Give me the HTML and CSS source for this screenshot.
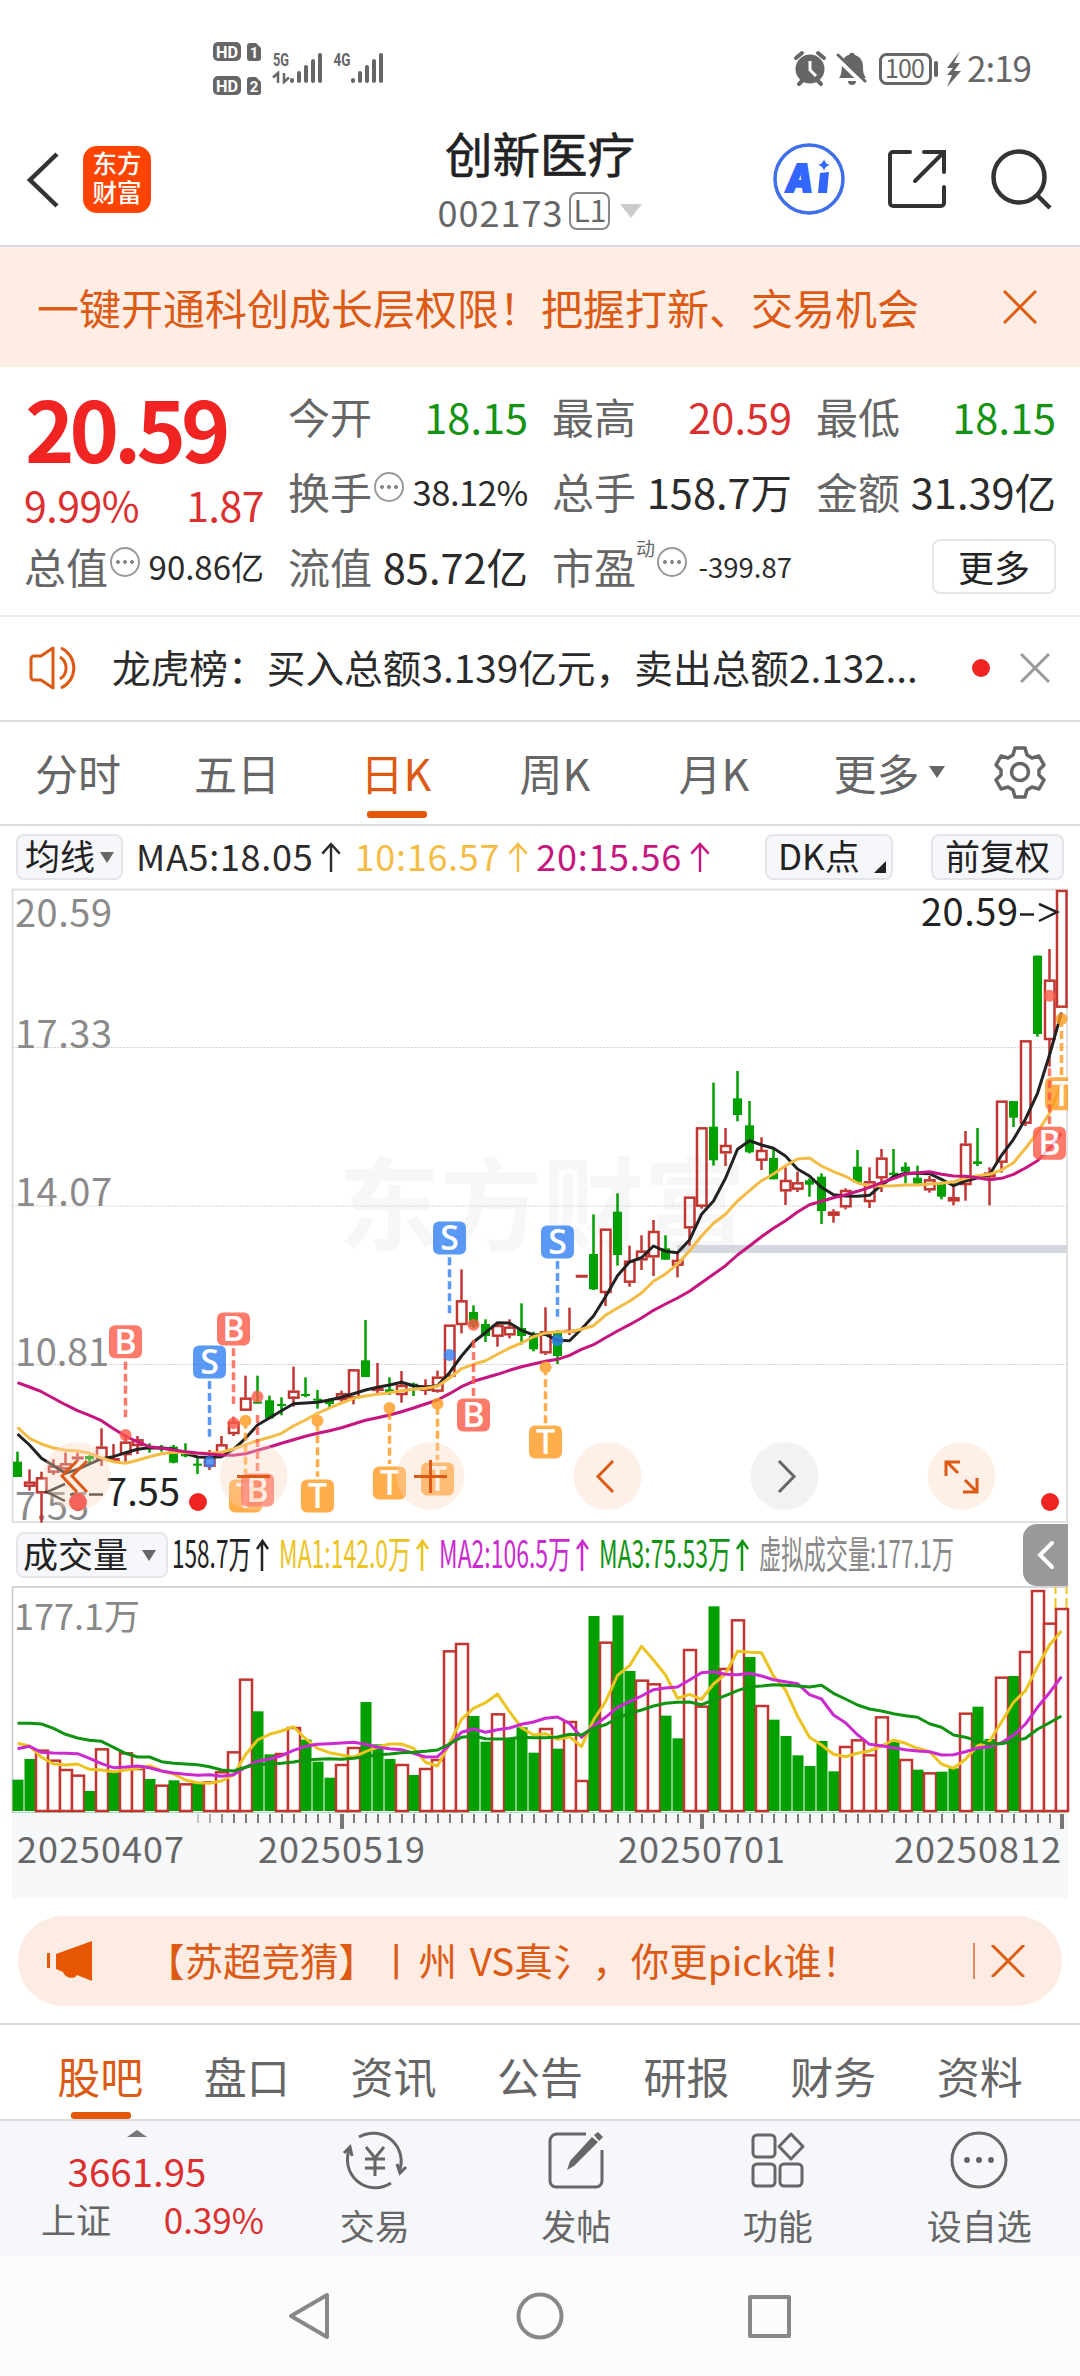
FILE: index.html
```html
<!DOCTYPE html>
<html lang="zh-CN">
<head>
  <meta charset="UTF-8">
  <meta name="viewport" content="width=device-width,initial-scale=1">
  <title>创新医疗 002173</title>
  <link rel="stylesheet" href="styles.css">
</head>
<body>
  <div class="status-bar">
    <svg class="status-left" viewBox="0 0 190 60" width="190" height="60">
      <g fill="#666">
        <rect x="3" y="2" width="28" height="19" rx="5"/>
        <path d="M37 6a3 3 0 013-3h6l5 5v10a3 3 0 01-3 3h-8a3 3 0 01-3-3z"/>
        <rect x="3" y="36" width="28" height="19" rx="5"/>
        <path d="M37 40a3 3 0 013-3h6l5 5v10a3 3 0 01-3 3h-8a3 3 0 01-3-3z"/>
      </g>
      <g class="badge-text" fill="#fff">
        <text x="17" y="17.500" font-size="16" textLength="22" lengthAdjust="spacingAndGlyphs">HD</text>
        <text x="44" y="17.500" font-size="15">1</text>
        <text x="17" y="51.500" font-size="16" textLength="22" lengthAdjust="spacingAndGlyphs">HD</text>
        <text x="44" y="51.500" font-size="15">2</text>
      </g>
      <g class="badge-text" fill="#666">
        <text x="71" y="26" font-size="18" textLength="16" lengthAdjust="spacingAndGlyphs">5G</text>
        <text x="132" y="26" font-size="18" textLength="17" lengthAdjust="spacingAndGlyphs">4G</text>
      </g>
      <path d="M68 43V33l-5 4.500M74 33v9l5-4.500" stroke="#666" stroke-width="2.500" fill="none"/>
      <g stroke="#666" stroke-width="4" stroke-linecap="round">
        <path d="M82 40v1M89 33v8M96 27v14M103 21v20M110 15v26"/>
        <path d="M143 40v1M150 33v8M157 27v14M164 21v20M171 15v26"/>
      </g>
    </svg>
    <svg class="status-right" viewBox="0 0 250 50" width="250" height="50">
      <circle cx="20" cy="23" r="14.500" fill="#666"/>
      <path d="M6 12l6-5M34 12l-6-5M9 38l4-4M31 38l-4-4" stroke="#666" stroke-width="4" stroke-linecap="round"/>
      <path d="M20 15v9l6 6" stroke="#fff" stroke-width="3" fill="none"/>
      <path d="M49 32c4-4 2-14 4-18 2-4 5-5 6-5 1-3 5-3 6 0 6 2 8 7 8 12 0 6 1 8 3 11z" fill="#666"/>
      <path d="M58 35h8a4 4 0 01-8 0z" fill="#666"/>
      <path d="M47 11l28 27" stroke="#fff" stroke-width="6"/>
      <path d="M48 9l27 26" stroke="#666" stroke-width="3" stroke-linecap="round"/>
      <rect x="90.500" y="8.500" width="50" height="29" rx="6" fill="none" stroke="#666" stroke-width="3"/>
      <path d="M146 17v12" stroke="#666" stroke-width="4" stroke-linecap="round"/>
      <text x="95" y="32" font-size="25" fill="#666" textLength="40">100</text>
      <path d="M170 5l-13 17h6l-6 7h5l-5 12 14-16h-7l6-8h-6z" fill="#666"/>
      <text x="177" y="36" font-size="35" fill="#666" textLength="65">2:19</text>
    </svg>
  </div>

  <header class="top-bar">
    <svg class="back" viewBox="0 0 36 60" width="36" height="60"><path d="M32 4L5 30l27 26" fill="none" stroke="#333" stroke-width="4.500"/></svg>
    <div class="logo"><span>东方</span><span>财富</span></div>
    <div class="stock-name">
      <h1>创新医疗</h1>
      <div class="stock-code">002173<span class="level">L1</span><i class="tri-down light"></i></div>
    </div>
    <div class="top-icons">
      <svg viewBox="0 0 74 74" width="74" height="74">
        <circle cx="37" cy="37" r="34" fill="none" stroke="#3f6eea" stroke-width="3.500"/>
        <text class="ai" x="14" y="50" font-size="39" textLength="27" lengthAdjust="spacingAndGlyphs">A</text>
        <path d="M48 31l9-1-2 21h-9z" fill="#3366ff"/>
        <path d="M52 17q1 5 6 6-5 1-6 6-1-5-6-6 5-1 6-6z" fill="#3366ff"/>
      </svg>
      <svg viewBox="0 0 60 60" width="60" height="60" fill="none" stroke="#333" stroke-width="4" stroke-linecap="round">
        <path d="M23 3H6a3 3 0 00-3 3v48a3 3 0 003 3h48a3 3 0 003-3V38M37 3h20v20M56 4L28 32"/>
      </svg>
      <svg viewBox="0 0 62 62" width="62" height="62" fill="none" stroke="#333" stroke-width="4.500">
        <circle cx="28" cy="28" r="25.500"/><path d="M46 46l13 13"/>
      </svg>
    </div>
  </header>

  <div class="promo">
    <span>一键开通科创成长层权限！把握打新、交易机会</span>
    <svg viewBox="0 0 34 34" width="34" height="34"><path d="M1 1l32 32M33 1L1 33" stroke="#e05a10" stroke-width="3"/></svg>
  </div>

  <section class="quote">
    <div class="quote-main">
      <div class="price">20.59</div>
      <div class="change"><span>9.99%</span><span>1.87</span></div>
      <div class="cell"><label>总值</label><i class="more-dot"></i><b class="s33">90.86亿</b></div>
    </div>
    <div class="quote-grid">
      <div class="cell"><label>今开</label><b class="down">18.15</b></div>
      <div class="cell"><label>最高</label><b class="up">20.59</b></div>
      <div class="cell"><label>最低</label><b class="down">18.15</b></div>
      <div class="cell"><label>换手</label><i class="more-dot"></i><b class="s36">38.12%</b></div>
      <div class="cell"><label>总手</label><b>158.7万</b></div>
      <div class="cell"><label>金额</label><b>31.39亿</b></div>
      <div class="cell"><label>流值</label><b>85.72亿</b></div>
      <div class="cell"><label>市盈</label><sup>动</sup><i class="more-dot"></i><b class="s28">-399.87</b></div>
      <div class="cell"><button class="more-btn">更多</button></div>
    </div>
  </section>

  <div class="notice">
    <svg viewBox="0 0 54 46" width="54" height="46" fill="none" stroke="#dd5a14" stroke-width="3">
      <path d="M24 3v40L12 35H5a3 3 0 01-3-3V14a3 3 0 013-3h7z" stroke-linejoin="round"/>
      <path d="M31 12a13 13 0 010 22M32 3a22 22 0 010 40"/>
    </svg>
    <span class="notice-text">龙虎榜：买入总额3.139亿元，卖出总额2.132...</span>
    <i class="red-dot"></i>
    <svg viewBox="0 0 30 30" width="30" height="30"><path d="M1 1l28 28M29 1L1 29" stroke="#999" stroke-width="3"/></svg>
  </div>

  <nav class="period-tabs">
    <span>分时</span>
    <span>五日</span>
    <span class="active">日K</span>
    <span>周K</span>
    <span>月K</span>
    <span class="period-more">更多<i class="tri-down small"></i></span>
    <svg viewBox="0 0 54 54" width="54" height="54" fill="none" stroke="#666" stroke-width="3.500">
      <path d="M22 3h10l2 7 5 3 7-2 5 9-5 5v5l5 5-5 9-7-2-5 3-2 7H22l-2-7-5-3-7 2-5-9 5-5v-5l-5-5 5-9 7 2 5-3z" stroke-linejoin="round"/>
      <circle cx="27" cy="27" r="8.500"/>
    </svg>
  </nav>

  <div class="ma-bar">
    <span class="chip">均线<i class="tri-down small"></i></span>
    <span class="ma ma5">MA5:18.05<svg class="up-arrow" viewBox="0 0 20 32"><path d="M10 31V2M1 12l9-10 9 10"/></svg></span>
    <span class="ma ma10">10:16.57<svg class="up-arrow" viewBox="0 0 20 32"><path d="M10 31V2M1 12l9-10 9 10"/></svg></span>
    <span class="ma ma20">20:15.56<svg class="up-arrow" viewBox="0 0 20 32"><path d="M10 31V2M1 12l9-10 9 10"/></svg></span>
    <span class="chip dk">DK点<i class="corner"></i></span>
    <span class="chip fq">前复权</span>
  </div>

  <svg class="k-chart" viewBox="0 0 1080 636" width="1080" height="636">
    <defs><clipPath id="plot"><rect x="12" y="0" width="1056" height="635"/></clipPath></defs>
    <text class="watermark" x="338" y="355" textLength="408">东方财富</text>
    <path d="M12.500 1v634M1067 1v634M12 1.500h1056M12 634h1056" stroke="#e0e0e0" stroke-width="2"/>
    <path d="M12 159.500h1056M12 318h1056M12 476.500h1056" stroke="#d5d5d5" stroke-width="1" stroke-dasharray="2 1"/>
    <g class="axis-text">
      <text x="15" y="39" textLength="97">20.59</text>
      <text x="15" y="160" textLength="97">17.33</text>
      <text x="15" y="318" textLength="97">14.07</text>
      <text x="15" y="478" textLength="94">10.81</text>
      <text x="15" y="632" textLength="74">7.55</text>
    </g>
    <rect x="677" y="357" width="390" height="8" fill="#d5d7de"/>
    <g id="candles" clip-path="url(#plot)"></g>
    <g class="mark-text">
      <text x="921" y="38" textLength="97">20.59</text>
      <text x="106" y="618" textLength="74">7.55</text>
    </g>
    <path d="M1020 26.500h14M1039 16l18 8-18 9M65 596l-18 8 18 9M70 606.500h9M89 606.500h14" fill="none" stroke="#222" stroke-width="2.500"/>
    <g fill="#f12424">
      <circle cx="78" cy="614" r="9"/><circle cx="198" cy="614" r="9"/><circle cx="1050" cy="614" r="9"/>
    </g>
    <g fill="#fbd3bd" fill-opacity=".36">
      <circle cx="77" cy="588" r="34"/><circle cx="253.500" cy="588" r="34"/><circle cx="430.500" cy="588" r="34"/>
      <circle cx="607.500" cy="588" r="34"/><circle cx="961.500" cy="588" r="34"/>
    </g>
    <circle cx="784.500" cy="588" r="34" fill="#f2f2f2"/>
    <g fill="none" stroke="#dd5a14" stroke-width="3">
      <path d="M77 573L62 588l15 16M87 573L72 588l15 16M237 588.500h33M414 588.500h33M430.500 572v33"/>
      <path d="M613 573l-15 15.500 15 15.500M958 585l-12-12M960 574h-14v14M965 592l12 12M963 604h14v-14"/>
      <path d="M779 573l15 15.500-15 15.500" stroke="#666"/>
    </g>
  </svg>

  <div class="vol-bar">
    <span class="chip">成交量<i class="tri-down small"></i></span>
    <svg class="vol-values" viewBox="170 0 800 62" width="800" height="62">
      <g font-size="38">
        <text x="172" y="44" fill="#222" textLength="79" lengthAdjust="spacingAndGlyphs">158.7万</text>
        <text x="279" y="44" fill="#ecc31f" textLength="132" lengthAdjust="spacingAndGlyphs">MA1:142.0万</text>
        <text x="439" y="44" fill="#cc2ad1" textLength="132" lengthAdjust="spacingAndGlyphs">MA2:106.5万</text>
        <text x="599" y="44" fill="#109310" textLength="132" lengthAdjust="spacingAndGlyphs">MA3:75.53万</text>
        <text x="759" y="44" fill="#888" textLength="195" lengthAdjust="spacingAndGlyphs">虚拟成交量:177.1万</text>
      </g>
      <g fill="none" stroke-width="2.500">
        <path d="M262 47V17M257 25l5.500-8 5.500 8" stroke="#222"/>
        <path d="M422 47V17M417 25l5.500-8 5.500 8" stroke="#ecc31f"/>
        <path d="M582 47V17M577 25l5.500-8 5.500 8" stroke="#cc2ad1"/>
        <path d="M742 47V17M737 25l5.500-8 5.500 8" stroke="#109310"/>
      </g>
    </svg>
    <span class="side-handle"><svg viewBox="0 0 20 32" width="20" height="32"><path d="M16 4L4 16l12 12" fill="none" stroke="#fff" stroke-width="4" stroke-linecap="round"/></svg></span>
  </div>

  <svg class="v-chart" viewBox="0 0 1080 227" width="1080" height="227">
    <path d="M12.500 227V1H1068" fill="none" stroke="#c8c8c8" stroke-width="1.500"/>
    <path d="M12 226.500h1056" stroke="#b5d8b5"/>
    <text x="14" y="44" font-size="36" fill="#888" textLength="126">177.1万</text>
    <path d="M1055.500 24V1M1066.500 24V1" stroke="#ecc31f" stroke-width="2" stroke-dasharray="12 4"/>
    <g id="volumes"></g>
  </svg>

  <svg class="time-axis" viewBox="12 0 1056 85" width="1056" height="85">
    <g id="ticks"></g>
    <g class="axis-date">
      <text x="17" y="50" textLength="167">20250407</text>
      <text x="258" y="50" textLength="167">20250519</text>
      <text x="618" y="50" textLength="167">20250701</text>
      <text x="894" y="50" textLength="167">20250812</text>
    </g>
  </svg>

  <div class="event">
    <svg viewBox="0 0 46 40" width="46" height="40" fill="#e85803"><path d="M0 12h3v15H0zM9 13L45 0v40l-15-6c-3 5-12 3-14-3l-7-3z"/></svg>
    <span class="event-text">【苏超竞猜】丨<em>州 VS真</em>氵，你更pick谁！</span>
    <i class="event-line"></i>
    <svg viewBox="0 0 34 32" width="34" height="32"><path d="M1 0l32 32M33 0L1 32" stroke="#e05a10" stroke-width="3"/></svg>
  </div>

  <nav class="info-tabs">
    <span class="active">股吧</span><span>盘口</span><span>资讯</span><span>公告</span><span>研报</span><span>财务</span><span>资料</span>
  </nav>

  <footer class="bottom-bar">
    <div class="index-box">
      <i class="tri-up"></i>
      <div class="index-value">3661.95</div>
      <div class="index-row"><span>上证</span><span class="up">0.39%</span></div>
    </div>
    <div class="action">
      <svg viewBox="0 0 66 60" width="66" height="60" fill="none" stroke="#666" stroke-width="3">
        <path d="M17 7A28 28 0 0157 42M49 53A28 28 0 018 18"/>
        <path d="M2 23l6-6 2 9M64 37l-6 6-3-9M24 17l9 11 9-11M23 29h20M23 38h20M33 28v18"/>
      </svg>
      <span>交易</span>
    </div>
    <div class="action">
      <svg viewBox="0 0 56 60" width="56" height="60" fill="none" stroke="#666" stroke-width="3">
        <path d="M38 4H9a7 7 0 00-7 7v40a6 6 0 006 6h40a6 6 0 006-6V20"/>
        <path d="M44 7l6 5-24 24-7 4 3-9zM46 5l4-3 5 5-4 4z" fill="#666" stroke="none"/>
      </svg>
      <span>发帖</span>
    </div>
    <div class="action">
      <svg viewBox="0 0 56 60" width="56" height="60" fill="none" stroke="#666" stroke-width="3">
        <rect x="3" y="5" width="22" height="22" rx="4"/>
        <rect x="3" y="34" width="22" height="22" rx="4"/>
        <rect x="30" y="34" width="22" height="22" rx="4"/>
        <path d="M41 4l12 12.500L41 29 29 16.500z" stroke-linejoin="round"/>
      </svg>
      <span>功能</span>
    </div>
    <div class="action">
      <svg viewBox="0 0 60 60" width="60" height="60" fill="#666">
        <circle cx="30" cy="30" r="27" fill="none" stroke="#666" stroke-width="3"/>
        <circle cx="18" cy="30" r="3"/><circle cx="30" cy="30" r="3"/><circle cx="42" cy="30" r="3"/>
      </svg>
      <span>设自选</span>
    </div>
  </footer>

  <div class="sys-nav">
    <svg viewBox="0 0 1080 120" width="1080" height="120" fill="none" stroke="#888" stroke-width="4" stroke-linejoin="round">
      <path d="M327 39v42l-36-21z"/><circle cx="540" cy="60" r="21.500"/><rect x="750" y="41" width="39" height="39"/>
    </svg>
  </div>
  <script src="script.js"></script>
</body>
</html>
```
FILE: styles.css
```css
:root {
  --up: #dc2f2f;
  --down: #149314;
  --orange: #dd5a14;
  --text: #2b2b2b;
  --gray: #666;
  --line: #dcdcdc;
  --peach: #fdede4;
  --chip: #f6f7fa;
}
* { box-sizing: border-box; }
body {
  margin: 0; width: 1080px; height: 2376px;
  font-family: "Noto Sans CJK SC", "Noto Sans", sans-serif;
  background: #fff; color: var(--text);
  overflow-x: hidden;
}
svg { display: block; flex: none; }
i, em { font-style: normal; }
.up { color: var(--up) !important; }
.down { color: var(--down) !important; }

/* status bar */
.status-bar {
  height: 130px; padding: 40px 32px 0 210px;
  display: flex; justify-content: space-between; align-items: flex-start;
}
.status-right { margin-top: 6px; margin-right: 8px; }
.badge-text { font-family: Roboto, sans-serif; font-weight: 700; text-anchor: middle; }

/* header */
.top-bar {
  height: 117px; border-bottom: 2px solid var(--line);
  display: grid; grid-template-columns: 83px 200px 514px 1fr;
}
.back { margin: 20px 0 0 25px; }
.logo {
  width: 68px; height: 67px; margin-top: 16px; padding-top: 2px;
  border-radius: 14px; background: #fe4400; color: #fff;
  font-size: 24.500px; line-height: 29px; font-weight: 500;
  display: flex; flex-direction: column; align-items: center;
}
.stock-name { text-align: center; }
.stock-name h1 { margin: -5px 0 0; font-size: 47.500px; line-height: 56px; font-weight: 400; color: #222; -webkit-text-stroke: .6px #222; }
.stock-code {
  display: flex; justify-content: center; align-items: center;
  font-size: 36px; line-height: 40px; color: var(--gray); letter-spacing: 1px;
  margin-top: 10px;
}
.level {
  width: 41px; height: 38px; margin-left: 6px; border: 2px solid #888; border-radius: 8px;
  font-size: 30px; line-height: 31px; letter-spacing: 0;
}
.tri-down {
  display: inline-block; width: 0; height: 0;
  border: 8px solid transparent; border-top: 12px solid #666; border-bottom: 0;
}
.tri-down.light { border-width: 14px 11px 0; border-top-color: #ccc; margin-left: 10px; }
.top-icons { display: flex; align-items: flex-start; margin: 12px 0 0 -25px; }
.top-icons svg:nth-child(2) { margin: 7px 0 0 41px; }
.top-icons svg:nth-child(3) { margin: 7px 0 0 44px; }
.ai { font-family: Inter, sans-serif; font-weight: 900; font-style: italic; fill: #3366ff; stroke: #3366ff; stroke-width: 2; }

.promo {
  height: 120px; padding: 0 43px 0 37px; background: var(--peach); color: var(--orange);
  font-size: 42px; line-height: 116px;
  display: flex; justify-content: space-between; align-items: center;
}

/* quote */
.quote {
  height: 250px; padding: 14px 24px 0; border-bottom: 2px solid #ebebeb;
  display: grid; grid-template-columns: 240px 768px; column-gap: 24px;
}
.quote-grid { display: grid; grid-template-columns: repeat(3, 240px); grid-auto-rows: 75px; column-gap: 24px; }
.cell { display: flex; align-items: center; height: 75px; line-height: 70px; padding-bottom: 5px; }
.cell label { font-size: 42px; color: var(--gray); white-space: nowrap; }
.cell b { margin-left: auto; font-size: 41.500px; font-weight: 400; }
.cell b.s36 { font-size: 34.500px; letter-spacing: -.4px; }
.cell b.s33 { font-size: 33px; }
.cell b.s28 { font-size: 27.500px; }
.cell sup { font-size: 19px; line-height: 20px; color: var(--gray); align-self: flex-start; margin-top: 7px; }
.more-dot {
  width: 30px; height: 30px; margin: -8px 0 0 2px; border: 2px solid #999; border-radius: 50%;
  background:
    radial-gradient(circle, #888 1.800px, transparent 2.200px) -7px 0 / 100% 100% no-repeat,
    radial-gradient(circle, #888 1.800px, transparent 2.200px) 0 0 / 100% 100% no-repeat,
    radial-gradient(circle, #888 1.800px, transparent 2.200px) 7px 0 / 100% 100% no-repeat;
}
.price {
  height: 100px; padding-left: 1px; color: #f12424;
  font-size: 84px; line-height: 92px; font-weight: 700; letter-spacing: -5px;
}
.change { height: 50px; display: flex; justify-content: space-between; color: var(--up); font-size: 41px; line-height: 46px; letter-spacing: -.5px; }
.more-btn {
  width: 124px; height: 55px; margin: 0 0 0 auto; padding: 0; font: 36px/45px "Noto Sans CJK SC", sans-serif; color: #222;
  background: #fff; border: 2px solid #e6e6e6; border-radius: 8px;
}

.notice { height: 105px; border-bottom: 2px solid var(--line); padding: 0 30px 2px 29px; display: flex; align-items: center; }
.notice-text { margin-left: 29px; width: 861px; font-size: 38.700px; line-height: 96px; white-space: nowrap; padding-bottom: 4px; }
.red-dot { width: 18px; height: 18px; border-radius: 50%; background: #f12424; margin-right: 30px; }

/* period tabs */
.period-tabs { height: 104px; border-bottom: 2px solid var(--line); display: flex; align-items: center; color: var(--gray); }
.period-tabs span { position: relative; width: 160px; margin-left: -1px; text-align: center; font-size: 43px; line-height: 102px; padding-bottom: 2px; }
.period-tabs span:first-child { margin-left: -2px; }
.period-tabs span.period-more { width: 180px; margin-left: 5px; }
.period-more .tri-down { margin-left: 9px; vertical-align: 13px; }
.period-tabs svg { margin: -2px 0 0 14px; }
.period-tabs .active, .info-tabs .active { color: var(--orange); }
.active::after {
  content: ""; position: absolute; left: 50%; bottom: 7px; width: 60px; height: 7px; margin-left: -29px;
  border-radius: 3px; background: #e45703;
}

/* chart legends */
.ma-bar { height: 62px; padding: 8px 16px 0; display: flex; align-items: flex-start; }
.chip {
  height: 46px; background: var(--chip); border: 2px solid #e4e6ea; border-radius: 8px;
  font-size: 35px; line-height: 38px; padding: 0 7px; color: #222; white-space: nowrap; flex: none;
}
.chip .tri-down { margin-left: 5px; vertical-align: 7px; border-width: 11px 7px 0; }
.ma { display: flex; align-items: center; font-size: 36px; line-height: 42px; letter-spacing: .7px; }
.up-arrow { width: 20px; height: 31px; margin: 4px 0 0 8px; fill: none; stroke: currentColor; stroke-width: 2.500; }
.ma5 { margin-left: 13px; width: 219px; }
.ma10 { width: 182px; color: #f5bc45; }
.ma20 { width: 227px; color: #c7157f; }
.chip.dk { width: 128px; padding-left: 11px; margin-left: 2px; position: relative; }
.corner { position: absolute; right: 5px; bottom: 5px; border-left: 12px solid transparent; border-bottom: 12px solid #222; }
.chip.fq { margin-left: 38px; padding: 0 12px; }

.watermark { font-size: 102px; font-weight: 700; fill: #f7f7f7; }
.axis-text { font-size: 38px; fill: #8a8a8a; }
.mark-text { font-size: 38px; fill: #222; }
.badge { font-family: "Open Sans", sans-serif; font-size: 34px; font-weight: 600; fill: #fff; text-anchor: middle; }

.vol-bar { height: 62px; display: flex; padding-left: 16px; }
.vol-bar .chip { width: 152px; margin-top: 8px; padding: 0 5px; }
.vol-bar .chip .tri-down { margin-left: 14px; }
.vol-values { margin-left: 2px; }
.side-handle {
  width: 45px; height: 62px; margin-left: 53px; background: #999; border-radius: 14px 0 0 14px;
  display: flex; align-items: center; justify-content: center;
}
.time-axis { margin-left: 12px; background: #f7f8fa; }
.axis-date { font-size: 36px; fill: #666; }

/* event banner */
.event {
  height: 90px; margin: 18px 18px 17px; padding: 0 37px 0 29px; border-radius: 45px;
  background: #fcece3; color: var(--orange); display: flex; align-items: center;
}
.event-text { margin-left: 53px; width: 829px; font-size: 38.500px; line-height: 84px; padding-bottom: 5px; white-space: pre; }
.event-text em { margin: 0 1px 0 3px; word-spacing: 4px; }
.event-line { width: 2px; height: 36px; margin-right: 16px; background: #e08a5c; }

.info-tabs { height: 98px; padding: 0 27px; border: solid var(--line); border-width: 2px 0; display: flex; color: var(--gray); }
.info-tabs span { position: relative; flex: 1; text-align: center; font-size: 43px; line-height: 101px; }
.info-tabs .active::after { bottom: 0; }

.bottom-bar { height: 135px; background: var(--chip); display: flex; color: var(--gray); }
.index-box { width: 274px; padding-top: 9px; text-align: center; }
.tri-up { display: block; width: 0; margin: 0 auto; border: 10px solid transparent; border-top: 0; border-bottom: 7px solid #777; }
.index-value { font-size: 38.500px; line-height: 50px; color: var(--up); margin-top: 8px; }
.index-row { display: flex; justify-content: space-between; padding: 0 10px 0 41px; font-size: 35px; line-height: 47px; }
.action { flex: 1; display: flex; flex-direction: column; align-items: center; padding-top: 9px; }
.action span { font-size: 35px; line-height: 50px; margin-top: 10px; }
.sys-nav { height: 120px; background: #fcfcfc; }
```
FILE: script.js
```js
// price chart: [high, body top, body bottom, low, up?], thirds of a pixel from the top
const candles = [
  [1715,1745,1791,1791,0],[1768,1805,1820,1832,1],[1775,1792,1840,1928,1],[1738,1757,1778,1785,1],
  [1718,1750,1768,1780,1],[1718,1730,1734,1745,1],[1726,1728,1738,1750,0],[1645,1700,1740,1758,1],
  [1692,1735,1739,1740,1],[1665,1685,1725,1745,1],[1668,1678,1698,1722,1],[1690,1700,1705,1718,0],
  [1695,1700,1704,1715,0],[1695,1700,1748,1750,0],[1690,1722,1729,1732,0],[1735,1751,1756,1782,0],
  [1710,1730,1760,1770,1],[1668,1693,1720,1722,1],[1610,1625,1662,1668,1],[1487,1553,1592,1592,1],
  [1487,1565,1571,1571,0],[1547,1561,1615,1617,0],[1552,1572,1577,1606,0],[1460,1532,1556,1580,1],
  [1492,1542,1546,1552,0],[1530,1556,1561,1586,0],[1555,1560,1572,1583,0],[1532,1540,1560,1565,1],
  [1468,1468,1555,1573,1],[1320,1441,1491,1491,0],[1449,1525,1531,1540,1],[1492,1528,1536,1545,0],
  [1473,1515,1545,1568,1],[1508,1511,1520,1548,0],[1498,1516,1532,1545,1],[1472,1490,1535,1538,1],
  [1334,1334,1490,1492,1],[1168,1261,1335,1360,1],[1276,1296,1340,1345,0],[1318,1332,1368,1386,0],
  [1330,1335,1370,1400,1],[1318,1340,1366,1375,1],[1270,1344,1368,1394,0],[1355,1368,1408,1414,0],
  [1282,1354,1420,1425,1],[1350,1358,1428,1452,0],[1283,1350,1356,1365,1],[1185,1185,1188,1188,1],
  [1003,1122,1228,1230,0],[1046,1046,1239,1278,1],[940,995,1125,1157,0],[1097,1142,1208,1220,1],
  [1066,1112,1141,1170,1],[1020,1053,1132,1188,1],[1066,1105,1139,1139,0],[1117,1140,1157,1192,1],
  [950,950,1045,1097,1],[742,742,980,986,1],[608,740,841,857,0],[744,795,820,858,1],
  [573,655,705,724,0],[663,736,817,820,0],[772,810,842,870,1],[808,834,898,898,0],
  [862,900,934,975,1],[875,907,929,936,1],[895,901,914,950,0],[880,890,993,1032,0],
  [988,995,1007,1028,1],[925,930,982,988,1],[810,860,907,907,0],[862,904,966,984,1],
  [807,833,895,936,1],[807,878,885,893,0],[847,860,875,910,0],[857,893,911,911,0],
  [888,898,931,938,1],[905,912,950,958,0],[910,952,964,976,1],[753,791,915,962,1],
  [744,844,852,858,0],[862,878,892,976,1],[662,662,848,878,1],[663,663,713,741,0],
  [481,481,731,738,1],[227,227,462,470,0],[207,299,480,560,1],[30,30,383,383,1]
];
const ma5 = [1662,1695,1735,1757,1780,1768,1752,1736,1730,1718,1708,1703,1704,1708,1720,1731,1732,1730,1708,1675,1635,1614,1592,1571,1569,1567,1560,1552,1541,1530,1522,1515,1507,1517,1522,1517,1478,1428,1386,1358,1328,1329,1351,1365,1363,1381,1382,1347,1308,1250,1187,1146,1133,1098,1114,1118,1080,1003,963,895,808,782,795,805,828,867,888,922,944,948,949,946,915,890,880,880,881,898,917,903,893,884,826,778,717,640,525,398];
const ma10 = [1642,1675,1692,1704,1711,1713,1720,1734,1745,1750,1741,1730,1721,1717,1718,1720,1720,1717,1707,1694,1682,1672,1660,1638,1620,1600,1584,1569,1555,1548,1543,1538,1532,1528,1525,1519,1494,1466,1453,1442,1423,1404,1389,1370,1359,1355,1355,1348,1337,1306,1284,1264,1239,1204,1182,1152,1113,1068,1030,1003,963,932,902,882,857,837,834,858,875,889,909,917,918,917,915,915,912,910,905,895,887,883,870,848,805,757,700,610];
const ma20 = [1508,1521,1535,1555,1574,1592,1606,1622,1646,1668,1686,1700,1705,1710,1715,1719,1722,1725,1726,1721,1711,1701,1690,1679,1669,1660,1652,1643,1632,1621,1613,1605,1595,1584,1572,1560,1541,1520,1504,1493,1483,1471,1460,1452,1444,1438,1426,1408,1394,1373,1353,1334,1314,1291,1272,1254,1234,1208,1183,1157,1125,1098,1070,1045,1022,996,974,964,953,944,934,922,908,896,882,878,875,883,888,889,893,899,895,883,864,842,805,760];

// volume chart: bar tops, up days prefixed with r
const volumes = 'g782 g720 r692 r722 r750 r767 g816 r688 g760 r700 r747 g780 r797 g784 r793 g793 r787 r757 r697 r479 g577 g706 r702 r624 g662 g728 g776 r735 r684 g549 g676 g720 r735 g768 r747 r720 r394 r372 g591 g668 r583 g660 g625 g701 r627 g689 r606 r783 g291 r368 g289 g456 r482 r493 g590 g658 r390 r560 g262 r447 r301 g414 r558 g602 g651 g709 g741 g666 g757 r681 r661 r706 r592 g668 r720 g752 r760 g758 g748 r581 g563 g660 r473 g471 r396 r213 r311 r267'.split(' ');
const vma1 = [670,678,712,732,735,732,748,750,755,750,745,737,752,762,780,788,790,783,765,704,660,643,633,620,656,685,698,705,712,695,682,672,672,685,727,738,670,598,565,548,522,575,623,645,641,658,650,680,600,545,466,437,379,420,465,535,523,538,492,462,394,397,398,468,510,588,652,675,703,710,700,693,678,660,670,685,695,732,745,718,678,664,606,547,512,440,375,333];
const vma2 = [686,679,697,699,700,701,715,731,743,741,738,743,753,759,763,766,764,769,764,742,724,717,707,691,679,673,671,669,667,673,682,686,689,700,711,710,675,637,627,637,629,624,613,606,595,591,610,652,618,592,562,545,528,509,504,501,480,458,455,463,464,460,468,479,485,491,524,537,585,608,644,673,677,683,689,693,695,705,704,695,684,680,668,646,612,562,518,470];
const vma3 = [610,610,612,625,643,654,661,664,682,700,711,711,725,730,732,734,740,750,753,742,733,732,730,726,720,718,716,718,715,710,704,702,698,697,694,690,672,652,648,656,657,656,652,653,653,651,643,645,625,614,594,580,570,558,550,547,546,554,540,527,512,500,498,494,496,498,501,496,520,537,555,567,573,581,587,592,611,622,645,652,662,671,671,664,655,628,608,588];

// trade marks: [day, letter, dot, line from, line to, badge centre]
const marks = [
  [9,'B',1665,1445,1612,1385],[16,'S',1746,1503,1670,1446],[18,'B',1630,1405,1572,1347],
  [19,'T',1622,1622,1780,1848],[20,'B',1550,1605,1773,1830],[25,'T',1622,1630,1790,1848],
  [31,'T',1584,1595,1752,1809],[35,'T',1571,1580,1740,1797],[36,'S',1425,1132,1300,1074],
  [38,'B',1334,1380,1548,1605],[44,'T',1462,1462,1630,1686],[45,'S',1381,1143,1310,1086],
  [87,'T',417,417,585,641],[86,'B',347,565,732,790]
];
const markColor = { B: '#fe5a47', S: '#3180f4', T: '#ff9a1f' };
const RED = '#c23531', GREEN = '#00a000';

const X = i => 17.5 + 12 * i;
const Y = v => v / 3 - 8;
const VY = v => v / 3 - 66;
const rect = (x, y, w, h, style) => `<rect x="${x}" y="${y}" width="${w}" height="${h}" ${style}/>`;
const line = (x, y1, y2, style) => `<path d="M${x} ${y1}V${y2}" ${style}/>`;
const curve = (data, y, color) =>
  `<polyline points="${data.map((v, i) => X(i) + ',' + y(v).toFixed(1)).join(' ')}" fill="none" stroke="${color}" stroke-width="3" stroke-linejoin="round"/>`;

let html = '';
candles.forEach(([hi, top, bot, lo, up], i) => {
  const x = X(i), t = Y(top), b = Y(bot);
  if (up) {
    const s = `stroke="${RED}" stroke-width="2.5"`;
    html += line(x, Y(hi), t, s) + line(x, b, Y(lo), s);
    html += rect(x - 4.5, t + 1, 9.5, Math.max(b - t - 2, .5), `fill="none" ${s}`);
  } else {
    html += line(x, Y(hi), Y(lo), `stroke="${GREEN}" stroke-width="2.5"`);
    html += rect(x - 4.5, t, 9, Math.max(b - t, 2), `fill="${GREEN}"`);
  }
});
html += curve(ma5, Y, '#222') + curve(ma10, Y, '#f5bc45') + curve(ma20, Y, '#c7157f');
marks.forEach(([i, letter, dot, from, to, badge]) => {
  const x = X(i), c = markColor[letter], y = Y(badge);
  html += `<g opacity=".8">` + line(x, Y(from), Y(to), `stroke="${c}" stroke-width="3.5" stroke-dasharray="8 4"`)
    + `<circle cx="${x}" cy="${Y(dot)}" r="6" fill="${c}"/>`
    + rect(x - 16.5, y - 16.5, 33, 33, `rx="6" fill="${c}"`)
    + `<text class="badge" x="${x}" y="${y + 12}">${letter}</text></g>`;
});
document.getElementById('candles').innerHTML = html;

html = '';
volumes.forEach((item, i) => {
  const y = VY(+item.slice(1)), x = X(i);
  html += item[0] === 'r'
    ? rect(x - 5.5, y, 12, 225 - y, `fill="#fff" stroke="${RED}" stroke-width="2.5"`)
    : rect(x - 5, y - 1, 11, 226 - y, `fill="${GREEN}"`);
});
html += curve(vma1, VY, '#ecc31f') + curve(vma2, VY, '#cc2ad1') + curve(vma3, VY, '#109310');
document.getElementById('volumes').innerHTML = html;

html = '';
for (let i = 15; i < 88; i++) {
  const big = i % 30 === 27;
  html += line(X(i) + .5, 1, big ? 16 : 10, `stroke="#777" stroke-width="${big ? 4 : 2}" opacity="${Math.min(1, (i - 13) / 5)}"`);
}
document.getElementById('ticks').innerHTML = html;
```
